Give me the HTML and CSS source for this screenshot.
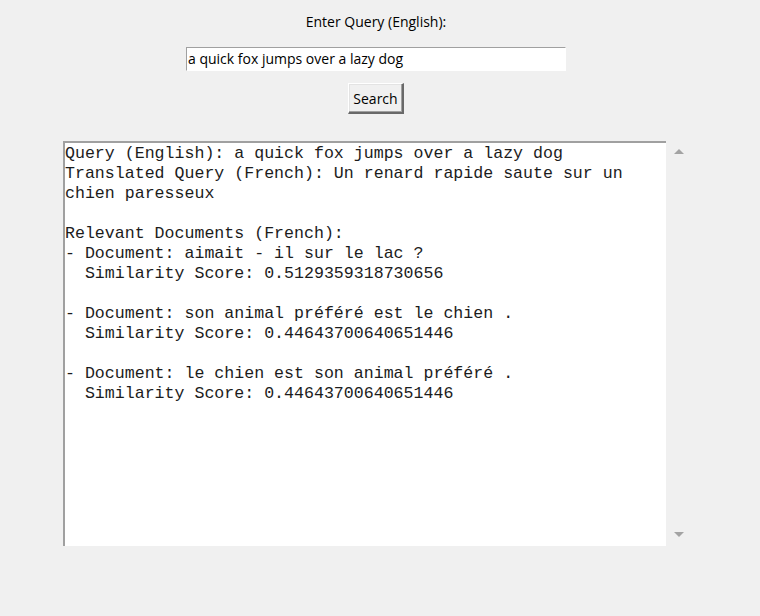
FILE: index.html
```html
<!DOCTYPE html>
<html>
<head>
<meta charset="utf-8">
<link rel="stylesheet" href="styles.css">
</head>
<body>
<div class="window">
  <div class="label">Enter Query (English):</div>
  <div class="entry">a quick fox jumps over a lazy dog</div>
  <div class="button">Search</div>
  <div class="results">
    <pre class="text">Query (English): a quick fox jumps over a lazy dog
Translated Query (French): Un renard rapide saute sur un
chien paresseux

Relevant Documents (French):
- Document: aimait - il sur le lac ?
  Similarity Score: 0.5129359318730656

- Document: son animal préféré est le chien .
  Similarity Score: 0.44643700640651446

- Document: le chien est son animal préféré .
  Similarity Score: 0.44643700640651446
</pre>
    <div class="scrollbar">
      <span class="arrow up"></span>
      <span class="arrow down"></span>
    </div>
  </div>
</div>
</body>
</html>
```

FILE: styles.css
```css
html, body {
  margin: 0;
  padding: 0;
  background: #f0f0f0;
}
.window {
  width: 752px;
  height: 616px;
  display: flex;
  flex-direction: column;
  align-items: center;
  padding-top: 13px;
  box-sizing: border-box;
  font-family: "Open Sans", "Noto Sans", sans-serif;
  font-size: 14px;
  color: #000;
}
.label {
  height: 18px;
  line-height: 18px;
}
.entry {
  margin-top: 16px;
  width: 380px;
  height: 24px;
  box-sizing: border-box;
  background: #fff;
  border-top: 1px solid #a0a0a0;
  border-left: 1px solid #a0a0a0;
  border-right: 1px solid #fff;
  border-bottom: 1px solid #fff;
  padding-left: 1px;
  line-height: 21px;
  font-size: 14px;
  white-space: nowrap;
}
.button {
  margin-top: 12px;
  width: 56px;
  height: 31px;
  box-sizing: border-box;
  background: #f0f0f0;
  border-top: 1px solid #fff;
  border-left: 1px solid #fff;
  border-right: 2px solid #696969;
  border-bottom: 2px solid #696969;
  box-shadow: inset -1px -1px 0 #a0a0a0, inset 1px 1px 0 #e3e3e3;
  display: flex;
  align-items: center;
  justify-content: center;
  font-size: 14px;
}
.results {
  margin-top: 27px;
  display: flex;
  height: 405px;
}
.text {
  margin: 0;
  width: 603px;
  height: 405px;
  box-sizing: border-box;
  background: #fff;
  border-top: 2px solid #a0a0a0;
  border-left: 2px solid #a0a0a0;
  padding: 1px 0 0 0;
  font-family: "Liberation Mono", "Courier New", monospace;
  font-size: 16.6px;
  line-height: 20px;
  color: #1c1c1c;
  overflow: hidden;
}
.scrollbar {
  width: 23px;
  height: 405px;
  position: relative;
  background: #f0f0f0;
}
.arrow {
  position: absolute;
  left: 8px;
  width: 0;
  height: 0;
  border-left: 5px solid transparent;
  border-right: 5px solid transparent;
}
.arrow.up {
  top: 8px;
  border-bottom: 5px solid #a3a3a3;
}
.arrow.down {
  bottom: 9px;
  border-top: 5px solid #a3a3a3;
}
```
